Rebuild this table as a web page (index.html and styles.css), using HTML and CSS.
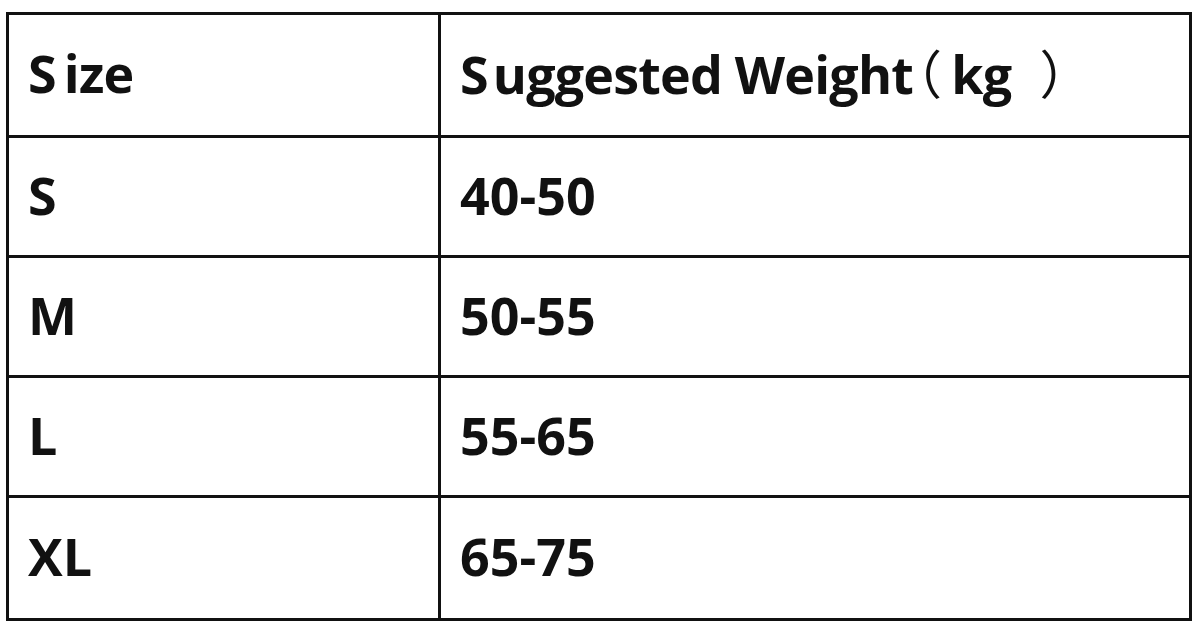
FILE: index.html
```html
<!DOCTYPE html>
<html>
<head>
<meta charset="utf-8">
<link rel="stylesheet" href="styles.css">
</head>
<body>
<div class="page">
  <table class="sizes">
    <tr class="head">
      <td class="c1"><span class="gapS">S</span>ize</td>
      <td class="c2"><span class="gapS2">S</span>uggested Weight<span class="cjk open">（</span>kg<span class="cjk close">）</span></td>
    </tr>
    <tr><td class="c1">S</td><td class="c2">40-50</td></tr>
    <tr><td class="c1">M</td><td class="c2">50-55</td></tr>
    <tr><td class="c1">L</td><td class="c2">55-65</td></tr>
    <tr class="last"><td class="c1">XL</td><td class="c2">65-75</td></tr>
  </table>
</div>
</body>
</html>
```

FILE: styles.css
```css
html, body {
  margin: 0;
  padding: 0;
  background: #ffffff;
}
.page {
  padding: 12px 8px 0 6px;
}
.sizes {
  width: 1186px;
  border-collapse: collapse;
  font-family: "Open Sans", "Noto Sans CJK SC", sans-serif;
  font-weight: 700;
  font-size: 52px;
  color: #111111;
}
.sizes td {
  border: 3px solid #111111;
  padding: 0 0 4px 19px;
  height: 113px;
  vertical-align: middle;
  line-height: 1;
}
.sizes .head td {
  height: 116px;
  letter-spacing: -0.8px;
}
.sizes .last td {
  height: 116px;
}
.c1 {
  width: 410px;
}
.gapS {
  margin-right: 8px;
}
.gapS2 {
  margin-right: 5px;
}
.cjk {
  font-family: "Noto Sans CJK SC", sans-serif;
  font-weight: 400;
  font-feature-settings: "palt";
}
.open {
  margin-left: 1px;
  margin-right: 12px;
}
.close {
  margin-left: 30px;
}
```
